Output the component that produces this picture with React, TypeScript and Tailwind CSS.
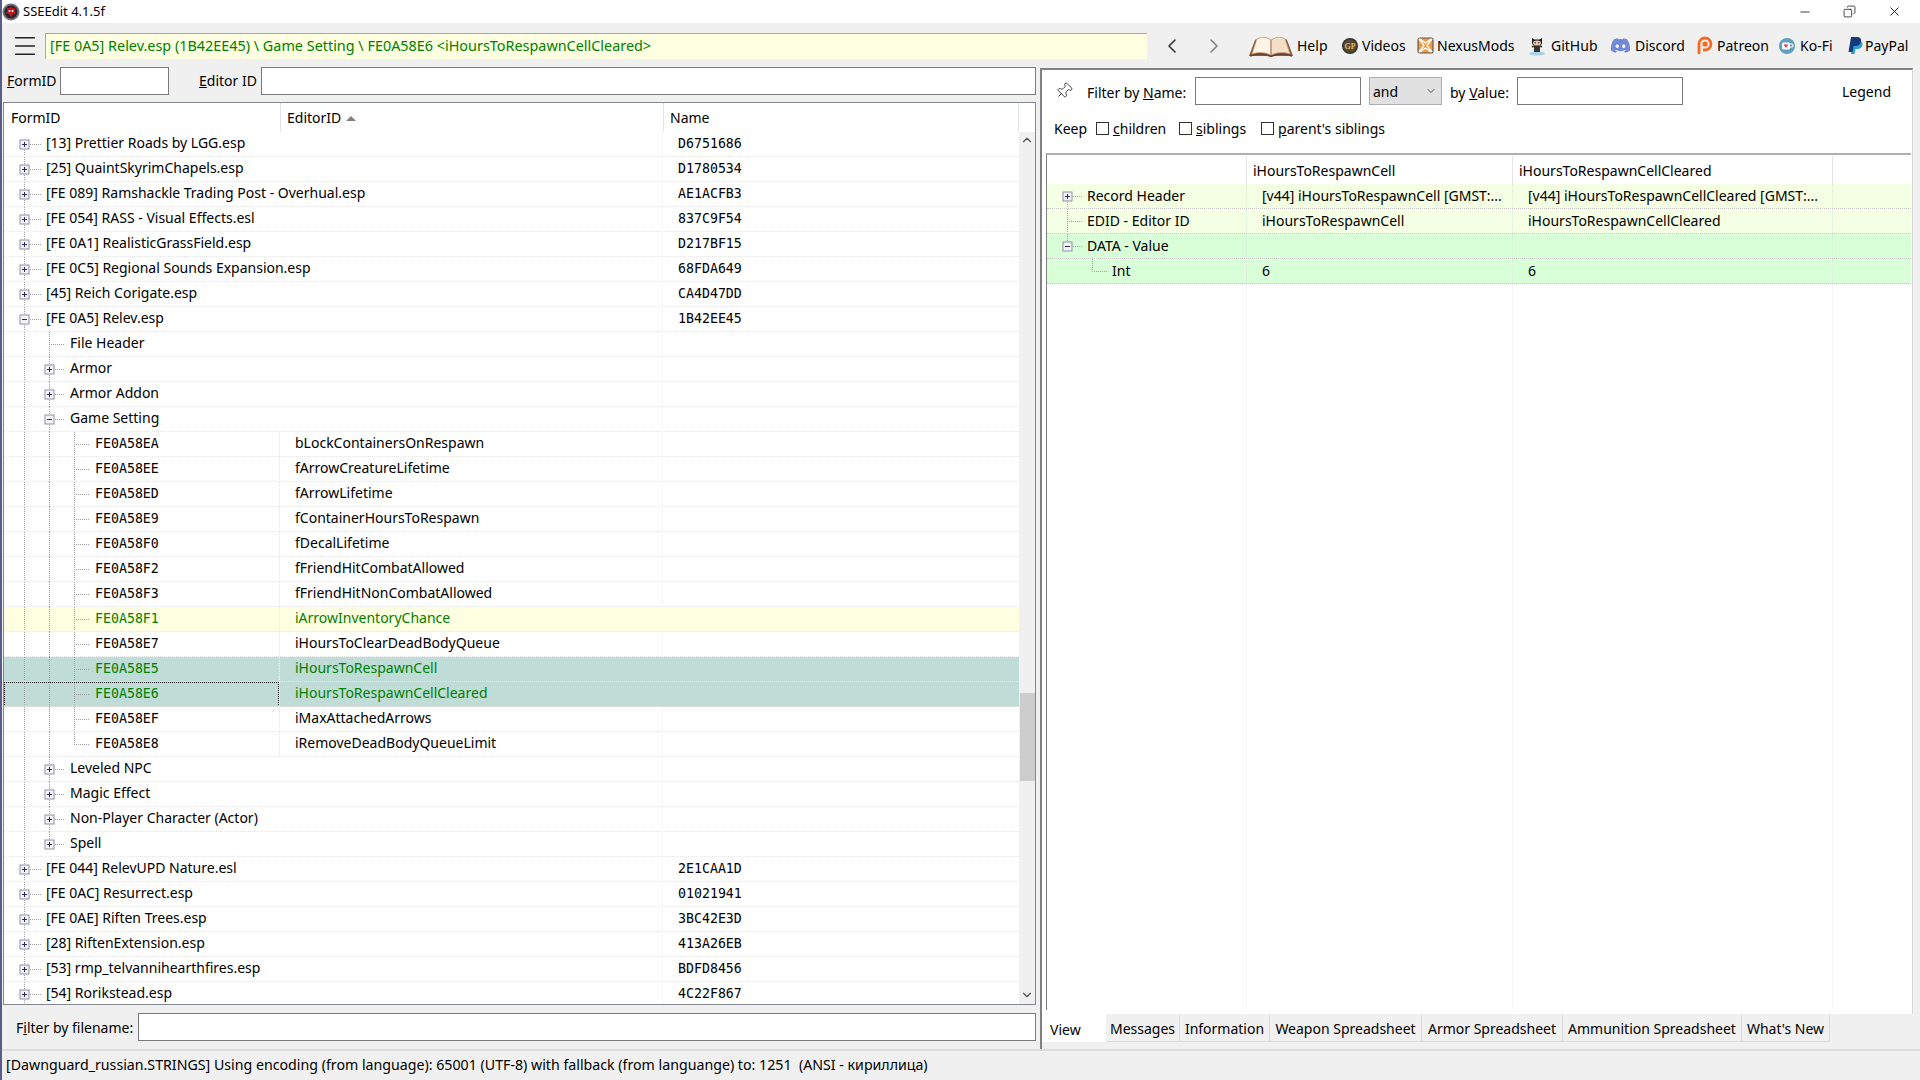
import {ChevronDown, ChevronLeft, ChevronRight, ChevronUp, Copy, Menu, Minus, Pin, X} from 'lucide-react'
import {FaDiscord} from 'react-icons/fa'

type Row = {
  level: number
  kind: 'plus' | 'minus' | 'leaf'
  a: string
  b?: string
  c?: string
  tone?: 'warn' | 'sel' | 'focus'
  last?: boolean
}

const plugin = (a: string, c: string): Row => ({level: 0, kind: 'plus', a, c})
const group = (a: string, kind: Row['kind'] = 'plus', last = false): Row => ({level: 1, kind, a, last})
const setting = (a: string, b: string, tone?: Row['tone'], last = false): Row => ({level: 2, kind: 'leaf', a, b, tone, last})

const rows: Row[] = [
  plugin('[13] Prettier Roads by LGG.esp', 'D6751686'),
  plugin('[25] QuaintSkyrimChapels.esp', 'D1780534'),
  plugin('[FE 089] Ramshackle Trading Post - Overhual.esp', 'AE1ACFB3'),
  plugin('[FE 054] RASS - Visual Effects.esl', '837C9F54'),
  plugin('[FE 0A1] RealisticGrassField.esp', 'D217BF15'),
  plugin('[FE 0C5] Regional Sounds Expansion.esp', '68FDA649'),
  plugin('[45] Reich Corigate.esp', 'CA4D47DD'),
  {level: 0, kind: 'minus', a: '[FE 0A5] Relev.esp', c: '1B42EE45'},
  group('File Header', 'leaf'),
  group('Armor'),
  group('Armor Addon'),
  group('Game Setting', 'minus'),
  setting('FE0A58EA', 'bLockContainersOnRespawn'),
  setting('FE0A58EE', 'fArrowCreatureLifetime'),
  setting('FE0A58ED', 'fArrowLifetime'),
  setting('FE0A58E9', 'fContainerHoursToRespawn'),
  setting('FE0A58F0', 'fDecalLifetime'),
  setting('FE0A58F2', 'fFriendHitCombatAllowed'),
  setting('FE0A58F3', 'fFriendHitNonCombatAllowed'),
  setting('FE0A58F1', 'iArrowInventoryChance', 'warn'),
  setting('FE0A58E7', 'iHoursToClearDeadBodyQueue'),
  setting('FE0A58E5', 'iHoursToRespawnCell', 'sel'),
  setting('FE0A58E6', 'iHoursToRespawnCellCleared', 'focus'),
  setting('FE0A58EF', 'iMaxAttachedArrows'),
  setting('FE0A58E8', 'iRemoveDeadBodyQueueLimit', undefined, true),
  group('Leveled NPC'),
  group('Magic Effect'),
  group('Non-Player Character (Actor)'),
  group('Spell', 'plus', true),
  plugin('[FE 044] RelevUPD Nature.esl', '2E1CAA1D'),
  plugin('[FE 0AC] Resurrect.esp', '01021941'),
  plugin('[FE 0AE] Riften Trees.esp', '3BC42E3D'),
  plugin('[28] RiftenExtension.esp', '413A26EB'),
  plugin('[53] rmp_telvannihearthfires.esp', 'BDFD8456'),
  plugin('[54] Rorikstead.esp', '4C22F867')
]

const tabs = [
  {label: 'Messages', w: 'w-[74px]'},
  {label: 'Information', w: 'w-[90px]'},
  {label: 'Weapon Spreadsheet', w: 'w-[152px]'},
  {label: 'Armor Spreadsheet', w: 'w-[141px]'},
  {label: 'Ammunition Spreadsheet', w: 'w-[179px]'},
  {label: "What's New", w: 'w-[88px]'}
]

function Expander({x, y, open}: {x: number; y: number; open: boolean}) {
  return (
    <g>
      <rect x={x - 4} y={y - 4} width="9" height="9" fill="#f4f4f8" stroke="#8f8f9f" />
      <path d={`M${x - 2} ${y + 0.5}h5`} stroke="#2b2b6b" />
      {!open && <path d={`M${x + 0.5} ${y - 2}v5`} stroke="#2b2b6b" />}
    </g>
  )
}

// tree connectors for one row, drawn in the row's indent
function TreeLines({row, first}: {row: Row; first: boolean}) {
  const xs = [20, 45, 70]
  const indent = [42, 66, 91][row.level]
  const x = xs[row.level]
  const mid = 12
  const dots = {stroke: '#a0a0a0', strokeDasharray: '1 1', fill: 'none'}
  return (
    <svg width={indent} height="25" className="shrink-0">
      {row.level > 0 && <path d="M20.5 0V25" {...dots} />}
      {row.level > 1 && <path d="M45.5 0V25" {...dots} />}
      <path d={`M${x + 0.5} ${first ? mid : 0}V${row.last ? mid : 25}`} {...dots} />
      <path d={`M${x} ${mid + 0.5}h${indent - x - 5}`} {...dots} />
      {row.kind !== 'leaf' && <Expander x={x} y={mid} open={row.kind === 'minus'} />}
    </svg>
  )
}

const hexFont = "font-['DejaVu_Sans_Mono',monospace] text-[13.25px] leading-[24px]"

function TreeRow({row, first}: {row: Row; first: boolean}) {
  const bg = row.tone === 'warn' ? 'bg-[#ffffe1]' : row.tone ? 'bg-[#bfdcd6]' : 'bg-white'
  const color = row.tone ? 'text-[#008000]' : 'text-black'
  const selected = row.tone === 'sel' || row.tone === 'focus'
  const divider = selected ? 'border-white' : 'border-[#e4e4e4]'
  return (
    <div className={`flex h-[25px] leading-[22px] ${bg} ${color}`}>
      <div className={`relative flex w-[276px] shrink-0 whitespace-nowrap ${row.level === 2 ? `border-r border-dotted ${divider}` : ''}`}>
        <TreeLines row={row} first={first} />
        <span className={row.level === 2 ? hexFont : ''}>{row.a}</span>
        {row.tone === 'focus' && <div className="absolute inset-0 border border-dotted border-black" />}
      </div>
      <div className={`w-[383px] shrink-0 border-r border-dotted pl-[15px] ${row.tone ? 'border-transparent' : 'border-[#f0f0f0]'}`}>{row.b}</div>
      <div className={`flex-1 pl-[15px] ${hexFont}`}>{row.c}</div>
    </div>
  )
}

function Tree() {
  return (
    <div className="flex h-[903px] flex-col border border-[#828790] bg-white">
      <div className="flex h-[29px] shrink-0 items-center bg-white">
        <div className="w-[276px] pl-[7px]">FormID</div>
        <div className="flex h-full w-[383px] items-center gap-[5px] border-l border-[#e5e5e5] pl-[6px]">
          EditorID
          <span className="mt-[1px] h-0 w-0 border-x-[5px] border-b-[5px] border-x-transparent border-b-[#808080]" />
        </div>
        <div className="flex h-full flex-1 items-center border-l border-[#e5e5e5] pl-[6px]">Name</div>
        <div className="h-full w-[17px] border-l border-[#e5e5e5]" />
      </div>
      <div className="flex min-h-0 flex-1">
        <div className="min-w-0 flex-1 overflow-hidden">
          {rows.map((r, i) => (
            <div key={r.a} className="relative">
              <TreeRow row={r} first={i === 0} />
              <div className="absolute inset-x-0 bottom-0 border-b border-dotted border-[#e6e6e6]" />
            </div>
          ))}
        </div>
        <div className="flex w-[16px] shrink-0 flex-col items-center bg-[#f0f0f0]">
          <ChevronUp size={14} strokeWidth={2} className="mt-[1px] text-[#505050]" />
          <div className="mt-[546px] h-[88px] w-[15px] bg-[#cdcdcd]" />
          <div className="flex-1" />
          <ChevronDown size={14} strokeWidth={2} className="mb-[2px] text-[#505050]" />
        </div>
      </div>
    </div>
  )
}

const gridCol = 'shrink-0 border-r border-dotted'

function GridRow({bg, label, indent, v1, v2, sign, line}: {bg: string; label: string; indent: number; v1?: string; v2?: string; sign?: 'plus' | 'minus'; line: string}) {
  return (
    <div className={`flex h-[25px] shrink-0 border-b border-dotted border-[#c8c8c8] leading-[24px] ${bg}`}>
      <div className={`flex w-[200px] ${gridCol} border-[#d8e8d8]`}>
        <svg width={indent} height="24" className="shrink-0">
          <path d={line} stroke="#a0a0a0" strokeDasharray="1 1" fill="none" />
          {sign && <Expander x={20} y={12} open={sign === 'minus'} />}
        </svg>
        {label}
      </div>
      <div className={`w-[266px] ${gridCol} border-[#d8e8d8] pl-[15px] whitespace-nowrap`}>{v1}</div>
      <div className={`w-[320px] ${gridCol} border-[#d8e8d8] pl-[15px] whitespace-nowrap`}>{v2}</div>
      <div className="flex-1" />
    </div>
  )
}

function GameIcon() {
  return (
    <svg width="18" height="18" viewBox="0 0 18 18" className="shrink-0">
      <circle cx="9" cy="9" r="8.5" fill="#6e7078" />
      <circle cx="9" cy="9" r="6.5" fill="#23232a" />
      <path d="M9 3.5l2 2 2.5-1-1 3 1.5 3-3 .5-2 3.5-2-3.5-3-.5 1.5-3-1-3 2.5 1z" fill="#c8141e" />
      <circle cx="7.5" cy="8" r="1" fill="#fff" />
      <circle cx="10.5" cy="8" r="1" fill="#fff" />
    </svg>
  )
}

function BookIcon() {
  return (
    <svg width="44" height="22" viewBox="0 0 44 22" className="shrink-0">
      <path d="M0 21L6 5C12 1 18 2 22 5C26 2 32 1 38 5L44 21Z" fill="#8a5a3a" />
      <path d="M3 19L8 4C13 1 18 2 21.5 5V20C16 17 9 17 3 19Z" fill="#fdf4e6" stroke="#c9a585" strokeWidth=".6" />
      <path d="M41 19L36 4C31 1 26 2 22.5 5V20C28 17 35 17 41 19Z" fill="#f3dfc8" stroke="#c9a585" strokeWidth=".6" />
      <path d="M1 21C9 18 16 19 22 21.5C28 19 35 18 43 21" stroke="#6a3f24" strokeWidth="1.4" fill="none" />
    </svg>
  )
}

function CoinIcon() {
  return (
    <svg width="16" height="16" viewBox="0 0 16 16" className="shrink-0">
      <circle cx="8" cy="8" r="8" fill="#38332d" />
      <circle cx="8" cy="8" r="6.5" fill="#55493a" />
      <text x="8" y="11" textAnchor="middle" fontSize="8" fontWeight="700" fontFamily="Liberation Serif" fill="#e0b860">GP</text>
    </svg>
  )
}

function NexusIcon() {
  return (
    <svg width="17" height="17" viewBox="0 0 17 17" className="shrink-0">
      <rect x="1" y="1" width="15" height="15" rx="2" fill="#f2973a" stroke="#5b5b5b" strokeWidth="1.2" />
      <path d="M2 2L7 8.5L2 15M15 2L10 8.5L15 15M3 2L8.5 6L14 2M3 15L8.5 11L14 15" stroke="#fff" strokeWidth="1.4" fill="none" />
    </svg>
  )
}

function OctocatIcon() {
  return (
    <svg width="20" height="20" viewBox="0 0 20 20" className="shrink-0">
      <ellipse cx="10" cy="17.5" rx="8" ry="2" fill="#a9d3e6" />
      <path d="M5 2l2.5 1.6h5L15 2v5c0 2-2 3-5 3S5 9 5 7z" fill="#1c1c1c" />
      <ellipse cx="10" cy="7" rx="4" ry="2.4" fill="#f2c9ae" />
      <circle cx="8.2" cy="6.8" r=".8" fill="#333" />
      <circle cx="11.8" cy="6.8" r=".8" fill="#333" />
      <path d="M7 10h6v6H7z" fill="#333" />
      <path d="M5 11l2-1M15 11l-2-1" stroke="#333" strokeWidth="1.4" />
    </svg>
  )
}

function PatreonIcon() {
  return (
    <svg width="16" height="19" viewBox="0 0 16 19" className="shrink-0">
      <path d="M2 18V8a6 6 0 1 1 6 6H6" fill="none" stroke="#f96a21" strokeWidth="2.8" />
      <circle cx="8" cy="8" r="2.6" fill="#f96a21" />
    </svg>
  )
}

function KofiIcon() {
  return (
    <svg width="16" height="16" viewBox="0 0 16 16" className="shrink-0">
      <circle cx="8" cy="8" r="8" fill="#5f9fc0" />
      <rect x="3" y="4.5" width="8" height="7" rx="1.5" fill="#fff" />
      <path d="M11 6h1.5a1.4 1.4 0 0 1 0 3H11" fill="none" stroke="#fff" strokeWidth="1.2" />
      <path d="M7 10L5 7.6a1.1 1.1 0 0 1 2-.9a1.1 1.1 0 0 1 2 .9z" fill="#e8506a" />
    </svg>
  )
}

function PaypalIcon() {
  return (
    <svg width="15" height="18" viewBox="0 0 15 18" className="shrink-0">
      <path d="M5 4h6c3 0 4 2 3.3 4.5C13.6 11 11.5 12 9.5 12H7.5L6.5 17H3z" fill="#2a9fd8" />
      <path d="M3 0h6c3 0 4.5 1.5 4 4.5C12.5 7.5 10 9 7.5 9H5.5L4.5 15H0.5z" fill="#173a7a" />
    </svg>
  )
}

function LinkItem({icon, label, gap, w}: {icon: React.ReactNode; label: string; gap: string; w: string}) {
  return (
    <div className={`flex shrink-0 items-center ${gap} ${w}`}>
      {icon}
      <span>{label}</span>
    </div>
  )
}

function Check({label, hot, w}: {label: string; hot: number; w: string}) {
  return (
    <div className={`flex items-center gap-[4px] ${w}`}>
      <span className="h-[13px] w-[13px] border border-[#333] bg-white" />
      <span>
        {label.slice(0, hot)}
        <span className="underline">{label[hot]}</span>
        {label.slice(hot + 1)}
      </span>
    </div>
  )
}

export default function App() {
  return (
    <div className="flex h-[1080px] w-[1920px] flex-col overflow-hidden border-l-2 border-[#5c5c8a] bg-[#f0f0f0] font-['Noto_Sans',sans-serif] text-[14px] text-black">
      {/* title bar */}
      <div className="flex h-[23px] shrink-0 items-center bg-white">
        <GameIcon />
        <span className="ml-[3px] text-[13px]">SSEEdit 4.1.5f</span>
        <div className="ml-auto flex items-center gap-[31px] pr-[18px] text-[#111]">
          <Minus size={14} strokeWidth={1.4} />
          <Copy size={13} strokeWidth={1.4} className="-scale-x-100" />
          <X size={15} strokeWidth={1.4} />
        </div>
      </div>

      {/* toolbar */}
      <div className="flex h-[45px] shrink-0 items-center">
        <Menu size={28} strokeWidth={1.3} className="ml-[9px] shrink-0 text-[#222]" />
        <div className="ml-[6px] flex h-[26px] w-[1102px] shrink-0 items-center border-t border-l border-[#a8a8a8] bg-[#ffffe1] pl-[4px] text-[14.4px] text-[#008000]">
          [FE 0A5] Relev.esp (1B42EE45) \ Game Setting \ FE0A58E6 &lt;iHoursToRespawnCellCleared&gt;
        </div>
        <ChevronLeft size={24} strokeWidth={1.6} className="ml-[13px] shrink-0 text-[#333]" />
        <ChevronRight size={24} strokeWidth={1.6} className="ml-[18px] shrink-0 text-[#808080]" />
        <div className="ml-[23px] flex items-center whitespace-nowrap">
          <LinkItem icon={<BookIcon />} label="Help" gap="gap-[4px]" w="w-[93px]" />
          <LinkItem icon={<CoinIcon />} label="Videos" gap="gap-[4px]" w="w-[75px]" />
          <LinkItem icon={<NexusIcon />} label="NexusMods" gap="gap-[3px]" w="w-[110px]" />
          <LinkItem icon={<OctocatIcon />} label="GitHub" gap="gap-[4px]" w="w-[83px]" />
          <LinkItem icon={<FaDiscord size={21} className="shrink-0 text-[#7289da]" />} label="Discord" gap="gap-[4px]" w="w-[87px]" />
          <LinkItem icon={<PatreonIcon />} label="Patreon" gap="gap-[4px]" w="w-[82px]" />
          <LinkItem icon={<KofiIcon />} label="Ko-Fi" gap="gap-[5px]" w="w-[69px]" />
          <LinkItem icon={<PaypalIcon />} label="PayPal" gap="gap-[2px]" w="w-[60px]" />
        </div>
      </div>

      {/* main */}
      <div className="flex min-h-0 flex-1">
        {/* left pane */}
        <div className="flex w-[1034px] shrink-0 flex-col pl-[1px]">
          <div className="-mt-[1px] flex h-[35px] shrink-0 items-start">
            <span className="mt-[3px] ml-[4px] w-[53px]"><span className="underline">F</span>ormID</span>
            <div className="h-[28px] w-[109px] border border-[#7a7a7a] bg-white" />
            <span className="mt-[3px] ml-[30px] w-[62px]"><span className="underline">E</span>ditor ID</span>
            <div className="h-[28px] flex-1 border border-[#7a7a7a] bg-white" />
          </div>
          <Tree />
          <div className="flex h-[44px] shrink-0 items-center">
            <span className="ml-[13px] w-[122px]">F<span className="underline">i</span>lter by filename:</span>
            <div className="h-[28px] flex-1 border border-[#7a7a7a] bg-white" />
          </div>
        </div>

        {/* splitter */}
        <div className="ml-[4px] w-[2px] shrink-0 bg-[#808080]" />

        {/* right pane */}
        <div className="ml-[-1px] flex w-[872px] shrink-0 flex-col">
          <div className="flex h-[946px] flex-col border-t-2 border-r border-l border-t-[#808080] border-r-[#d8d8d8] border-l-[#808080] bg-white pl-[4px]">
            <div className="flex h-[42px] shrink-0 items-center">
              <Pin size={18} strokeWidth={1.2} className="ml-[9px] rotate-45 text-[#333]" />
              <span className="mt-[2px] ml-[14px] w-[108px]">Filter by <span className="underline">N</span>ame:</span>
              <div className="h-[28px] w-[166px] border border-[#7a7a7a] bg-white" />
              <div className="ml-[8px] flex h-[28px] w-[73px] items-center justify-between border border-[#adadad] bg-[#e1e1e1] px-[3px]">
                and
                <ChevronDown size={12} className="mr-[1px] text-[#555]" />
              </div>
              <span className="mt-[2px] ml-[8px] w-[67px]">by <span className="underline">V</span>alue:</span>
              <div className="h-[28px] w-[166px] border border-[#7a7a7a] bg-white" />
              <span className="ml-[159px]">Legend</span>
            </div>
            <div className="flex h-[41px] shrink-0 items-center pb-[8px]">
              <span className="ml-[8px] w-[42px]">Keep</span>
              <Check label="children" hot={0} w="w-[83px]" />
              <Check label="siblings" hot={0} w="w-[82px]" />
              <Check label="parent's siblings" hot={0} w="w-[130px]" />
            </div>
            <div className="mb-[4px] flex min-h-0 w-[865px] flex-1 flex-col border-t-2 border-l border-t-[#b0b0b0] border-l-[#808080]">
              <div className="flex h-[29px] shrink-0 items-center pt-[1px]">
                <div className="h-full w-[200px] border-r border-[#e5e5e5]" />
                <div className="flex h-full w-[266px] items-center border-r border-[#e5e5e5] pl-[6px]">iHoursToRespawnCell</div>
                <div className="flex h-full w-[320px] items-center border-r border-[#e5e5e5] pl-[6px]">iHoursToRespawnCellCleared</div>
              </div>
              <GridRow bg="bg-[#f5ffe3]" label="Record Header" indent={40} sign="plus" line="M20.5 12V25M20 12.5h16" v1="[v44] iHoursToRespawnCell [GMST:..." v2="[v44] iHoursToRespawnCellCleared [GMST:..." />
              <GridRow bg="bg-[#f5ffe3]" label="EDID - Editor ID" indent={40} line="M20.5 0V25M20 12.5h16" v1="iHoursToRespawnCell" v2="iHoursToRespawnCellCleared" />
              <GridRow bg="bg-[#d9ffd9]" label="DATA - Value" indent={40} sign="minus" line="M20.5 0V12M20 12.5h16" />
              <GridRow bg="bg-[#d9ffd9]" label="Int" indent={65} line="M45.5 0V12.5H61" v1="6" v2="6" />
              <div className="flex min-h-0 flex-1">
                <div className="w-[200px] border-r border-dotted border-[#eeeeee]" />
                <div className="w-[266px] border-r border-dotted border-[#eeeeee]" />
                <div className="w-[320px] border-r border-dotted border-[#eeeeee]" />
              </div>
            </div>
          </div>
          <div className="flex h-[35px] shrink-0 items-start border-l border-[#808080]">
            <div className="-mt-[1px] flex h-[29px] w-[64px] items-center bg-white pt-[4px] pl-[8px]">View</div>
            {tabs.map(t => (
              <div key={t.label} className={`mt-[1px] flex h-[27px] items-center justify-center border-r border-b border-[#d9d9d9] whitespace-nowrap ${t.w}`}>
                {t.label}
              </div>
            ))}
          </div>
        </div>
      </div>

      {/* status bar */}
      <div className="flex h-[31px] shrink-0 items-center border-t-2 border-[#dcdcdc] pb-[2px] pl-[4px] text-[14.2px] whitespace-pre">
        [Dawnguard_russian.STRINGS] Using encoding (from language): 65001 (UTF-8) with fallback (from languange) to: 1251  (ANSI - кириллица)
      </div>
    </div>
  )
}
